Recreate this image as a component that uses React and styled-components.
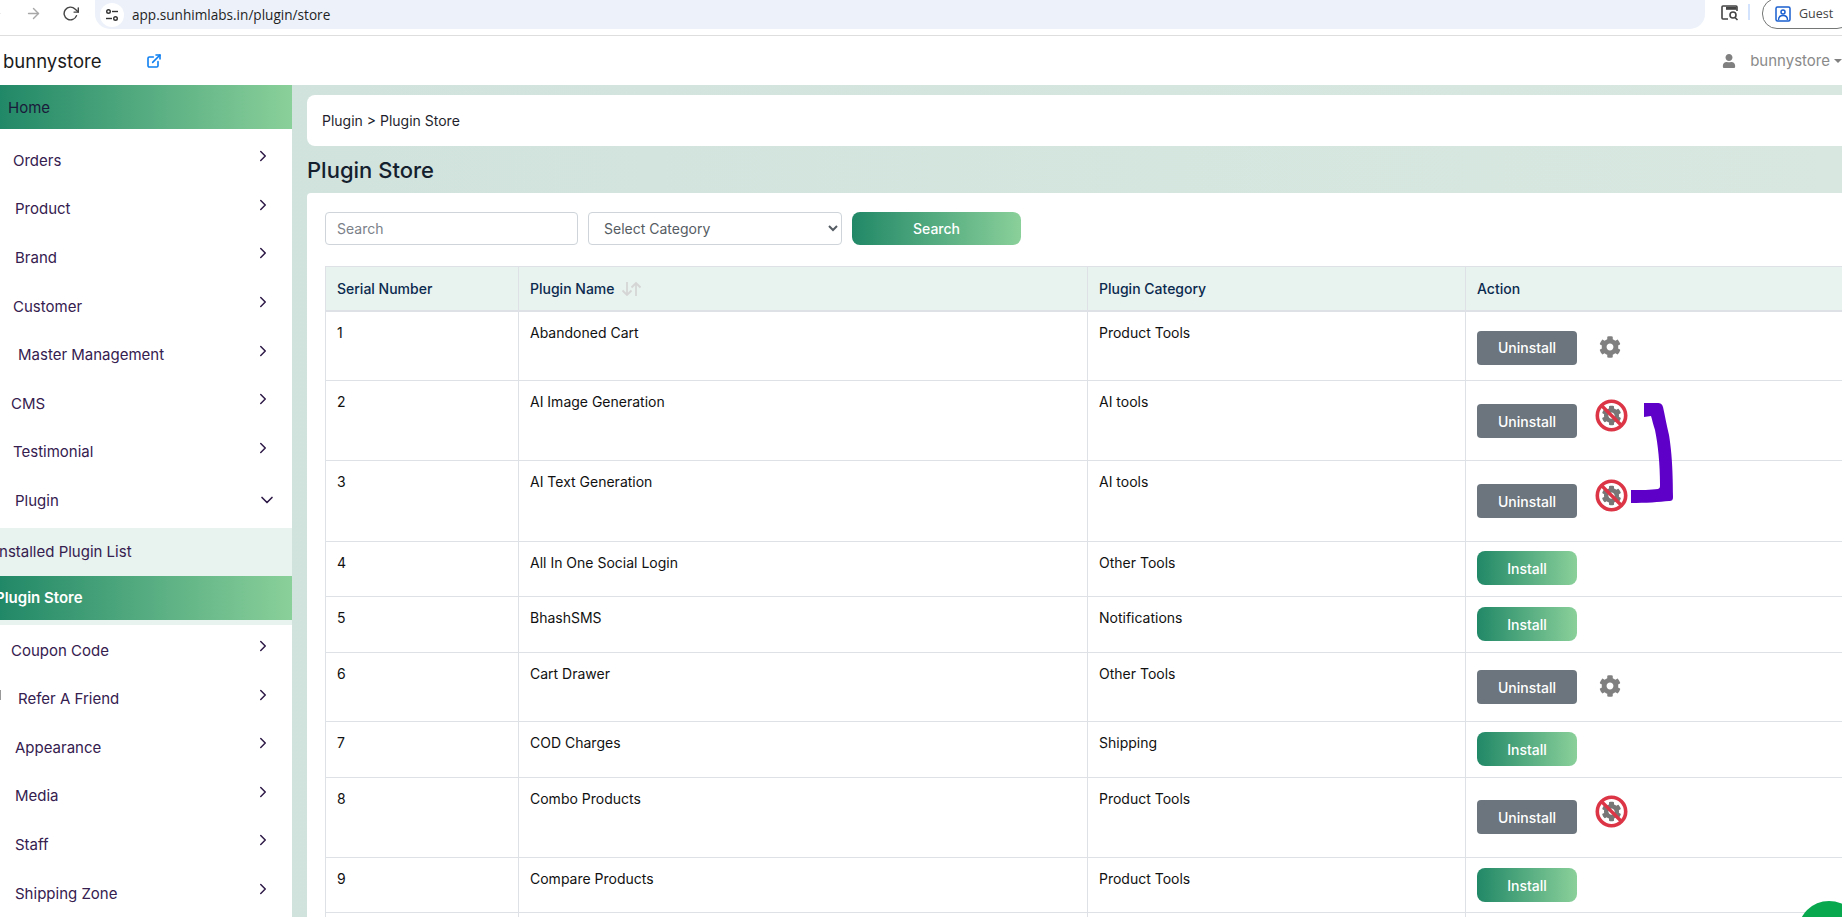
import React from "react";
import styled, { createGlobalStyle } from "styled-components";
import { FaCog, FaUser } from "react-icons/fa";
import { FiChevronRight, FiChevronDown, FiArrowLeft, FiArrowRight, FiRotateCw } from "react-icons/fi";
import { LuExternalLink } from "react-icons/lu";

const GREEN = "linear-gradient(90deg, #218867 0%, #8ad09a 100%)";
const FONT = `Inter, "Open Sans", sans-serif`;

const GlobalStyle = createGlobalStyle`
  html, body { margin: 0; padding: 0; height: 917px; overflow: hidden; background: #fff; }
  * { box-sizing: border-box; }
  body { font-family: ${FONT}; }
`;

const Page = styled.div`
  position: relative;
  width: 1842px;
  height: 917px;
  overflow: hidden;
  display: flex;
  flex-direction: column;
`;

/* browser chrome */
const Chrome = styled.div`
  height: 36px;
  flex: none;
  display: flex;
  align-items: flex-start;
  background: #fff;
  border-bottom: 1px solid #dedede;
`;
const NavBtn = styled.span`
  width: ${(p) => p.$w}px;
  height: 26px;
  flex: none;
  display: flex;
  align-items: center;
  justify-content: flex-end;
  color: ${(p) => p.$color};
  font-size: 17px;
`;
const Address = styled.div`
  margin-left: 16px;
  width: 1610px;
  height: 29px;
  flex: none;
  display: flex;
  align-items: center;
  gap: 8px;
  padding-left: 5px;
  background: #edf2fa;
  border-radius: 0 0 15px 15px;
  font-family: "Open Sans", sans-serif;
  font-size: 13.6px;
  color: #1f1f1f;
`;
const SiteIcon = styled.span`
  width: 24px;
  height: 24px;
  border-radius: 50%;
  background: #fff;
  display: flex;
  align-items: center;
  justify-content: center;
`;
const Lens = styled.span`
  margin-left: 16px;
  width: 18px;
  height: 26px;
  flex: none;
  display: flex;
  align-items: center;
`;
const Divider = styled.span`
  margin: 4px 12px 0 9px;
  width: 2px;
  height: 16px;
  flex: none;
  background: #d3e3fd;
`;
const Guest = styled.div`
  margin-top: -2px;
  width: 90px;
  height: 31px;
  flex: none;
  display: flex;
  align-items: center;
  gap: 8px;
  padding-left: 12px;
  border: 1px solid #747775;
  border-radius: 15px;
  font-family: "Open Sans", sans-serif;
  font-size: 12.5px;
  color: #444;
`;

/* app header */
const Header = styled.header`
  height: 49px;
  flex: none;
  display: flex;
  align-items: center;
  justify-content: space-between;
  background: #fff;
`;
const Brand = styled.div`
  display: flex;
  align-items: center;
  padding-left: 3px;
  font-size: 18.5px;
  color: #1b1b1b;
`;
const BrandLink = styled.span`
  margin-left: 45px;
  display: flex;
  color: #0d7ff0;
`;
const UserBox = styled.div`
  display: flex;
  align-items: center;
  color: #808080;
  font-size: 15px;
  margin-right: 0;
`;
const UserName = styled.span`
  margin-left: 14px;
  color: #8a8a8a;
`;
const Caret = styled.span`
  margin-left: 4px;
  width: 0;
  height: 0;
  border-left: 4px solid transparent;
  border-right: 4px solid transparent;
  border-top: 4px solid #808080;
`;

const Body = styled.div`
  flex: 1;
  min-height: 0;
  display: flex;
  background: linear-gradient(90deg, #c4d9d5 0%, #d0e2dc 3%, #d8e8e1 100%);
`;

/* sidebar */
const Sidebar = styled.nav`
  width: 292px;
  flex: none;
  background: #fff;
`;
const HomeRow = styled.div`
  height: 44px;
  margin-bottom: 7px;
  padding-left: 8px;
  display: flex;
  align-items: center;
  background: ${GREEN};
  color: #1a1a3a;
  font-size: 15px;
`;
const MenuRow = styled.div`
  height: 48.6px;
  display: flex;
  align-items: center;
  justify-content: space-between;
  padding-left: ${(p) => p.$indent}px;
  padding-right: 20px;
  color: #35204f;
  font-size: 15px;
`;
const Chevron = styled.span`
  display: flex;
  margin-top: -8px;
  font-size: 18px;
  color: #2e1a47;
`;
const DownChevron = styled.span`
  display: flex;
  font-size: 20px;
  margin-right: -5px;
  color: #2e1a47;
`;
const SubMenu = styled.div`
  margin-top: 3px;
  margin-bottom: 1px;
  padding-bottom: 5px;
  background: #e8f2ee;
`;
const SubRow = styled.div`
  height: ${(p) => (p.$active ? 44 : 48)}px;
  display: flex;
  align-items: center;
  color: ${(p) => (p.$active ? "#fff" : "#35204f")};
  background: ${(p) => (p.$active ? GREEN : "transparent")};
  font-size: 15px;
  font-weight: ${(p) => (p.$active ? 600 : 400)};
`;
const SubLabel = styled.span`
  margin-left: -5px;
  white-space: nowrap;
`;
const Tick = styled.span`
  position: absolute;
  left: 0;
  top: 690px;
  width: 1px;
  height: 10px;
  background: #999;
`;

/* main column */
const Main = styled.main`
  flex: 1;
  min-width: 0;
  padding: 10px 0 0 15px;
`;
const Crumbs = styled.div`
  margin-right: -20px;
  height: 51px;
  display: flex;
  align-items: center;
  padding-left: 15px;
  background: #fff;
  border-radius: 8px;
  font-size: 14px;
  color: #1f1f2e;
`;
const Title = styled.h1`
  margin: 0;
  height: 47px;
  display: flex;
  align-items: center;
  font-size: 22px;
  font-weight: 500;
  color: #14202e;
`;
const Card = styled.section`
  margin-right: -40px;
  padding: 19px 18px 0;
  background: #fff;
  border-radius: 4px 0 0 0;
`;
const Filters = styled.div`
  display: flex;
  gap: 10px;
  margin-bottom: 21px;
`;
const SearchInput = styled.input`
  width: 253px;
  height: 33px;
  padding: 0 11px;
  border: 1px solid #ced4da;
  border-radius: 4px;
  font-family: ${FONT};
  font-size: 14px;
  &::placeholder { color: #7b8189; }
`;
const CategorySelect = styled.select`
  width: 254px;
  height: 33px;
  padding: 0 11px;
  border: 1px solid #ced4da;
  border-radius: 4px;
  background: #fff;
  font-family: ${FONT};
  font-size: 14px;
  color: #555c63;
`;
const SearchButton = styled.button`
  width: 169px;
  height: 33px;
  border: 0;
  border-radius: 8px;
  background: ${GREEN};
  color: #fff;
  font-family: ${FONT};
  font-size: 14px;
  font-weight: 500;
`;
const Table = styled.table`
  width: 1540px;
  table-layout: fixed;
  border-collapse: collapse;
  font-size: 14px;
  color: #111;
`;
const Th = styled.th`
  width: ${(p) => p.$w}px;
  height: 44px;
  padding: 0 11px;
  text-align: left;
  font-weight: 500;
  color: #0b2a4f;
  background: #e8f2ee;
  border: 1px solid #dee2e6;
  border-bottom-width: 2px;
`;
const Td = styled.td`
  height: ${(p) => p.$h}px;
  padding: 10px 11px 0;
  vertical-align: top;
  line-height: 21px;
  border: 1px solid #dee2e6;
`;
const ActionTd = styled(Td)`
  padding: ${(p) => p.$top}px 11px 0;
`;
const Actions = styled.div`
  display: flex;
  align-items: flex-start;
`;
const ActionBtn = styled.button`
  width: 100px;
  height: 34px;
  flex: none;
  border: 0;
  border-radius: ${(p) => (p.$install ? 8 : 4)}px;
  background: ${(p) => (p.$install ? GREEN : "#6c757d")};
  color: #fff;
  font-family: ${FONT};
  font-size: 14px;
  font-weight: 500;
`;
const GearWrap = styled.span`
  margin: 5px 0 0 22px;
  display: flex;
  font-size: 22px;
  color: #808080;
`;
const NoGearWrap = styled.span`
  margin: -5px 0 0 18px;
  display: flex;
`;
const SortIcon = styled.svg`
  margin-left: 6px;
  vertical-align: -3px;
`;

/* things lying over the page */
const Scribble = styled.svg`
  position: absolute;
  left: 1628px;
  top: 400px;
`;
const ChatBubble = styled.div`
  position: absolute;
  left: 1798px;
  top: 901px;
  width: 62px;
  height: 62px;
  border-radius: 50%;
  background: #08a84f;
`;

const menuTop = [
  ["Orders", 13],
  ["Product", 15],
  ["Brand", 15],
  ["Customer", 13],
  ["Master Management", 18],
  ["CMS", 11],
  ["Testimonial", 13],
];
const menuBottom = [
  ["Coupon Code", 11],
  ["Refer A Friend", 18],
  ["Appearance", 15],
  ["Media", 15],
  ["Staff", 15],
  ["Shipping Zone", 15],
];

const rows = [
  { name: "Abandoned Cart", cat: "Product Tools", h: 70, top: 19, state: "gear" },
  { name: "AI Image Generation", cat: "AI tools", h: 80, top: 23, state: "off" },
  { name: "AI Text Generation", cat: "AI tools", h: 81, top: 23, state: "off" },
  { name: "All In One Social Login", cat: "Other Tools", h: 55, top: 9 },
  { name: "BhashSMS", cat: "Notifications", h: 56, top: 10 },
  { name: "Cart Drawer", cat: "Other Tools", h: 69, top: 17, state: "gear" },
  { name: "COD Charges", cat: "Shipping", h: 56, top: 10 },
  { name: "Combo Products", cat: "Product Tools", h: 80, top: 22, state: "off" },
  { name: "Compare Products", cat: "Product Tools", h: 55, top: 10 },
  { name: "", cat: "", h: 60, top: 10, empty: true },
];

const NoGear = () => (
  <NoGearWrap>
    <svg width="33" height="33" viewBox="0 0 33 33">
      <circle cx="16.5" cy="16.5" r="14.2" fill="#fff" stroke="#dc3545" strokeWidth="3.6" />
      <g transform="translate(6.5 6.5) scale(0.0390625)">
        <path
          fill="#777"
          d="M487.4 315.7l-42.6-24.6c4.3-23.2 4.3-47 0-70.2l42.6-24.6c4.9-2.8 7.1-8.6 5.5-14-11.1-35.6-30-67.8-54.7-94.6-3.8-4.1-10-5.1-14.8-2.3L380.8 110c-17.9-15.4-38.5-27.3-60.8-35.1V25.8c0-5.6-3.9-10.5-9.4-11.7-36.7-8.2-74.3-7.8-109.2 0-5.5 1.2-9.4 6.1-9.4 11.7V75c-22.2 7.9-42.8 19.8-60.8 35.1L88.7 85.5c-4.9-2.8-11-1.9-14.8 2.3-24.7 26.7-43.6 58.9-54.7 94.6-1.7 5.4.6 11.2 5.5 14L67.3 221c-4.3 23.2-4.3 47 0 70.2l-42.6 24.6c-4.9 2.8-7.1 8.6-5.5 14 11.1 35.6 30 67.8 54.7 94.6 3.8 4.1 10 5.1 14.8 2.3l42.6-24.6c17.9 15.4 38.5 27.3 60.8 35.1v49.2c0 5.6 3.9 10.5 9.4 11.7 36.7 8.2 74.3 7.8 109.2 0 5.5-1.2 9.4-6.1 9.4-11.7v-49.2c22.2-7.9 42.8-19.8 60.8-35.1l42.6 24.6c4.9 2.8 11 1.9 14.8-2.3 24.7-26.7 43.6-58.9 54.7-94.6 1.5-5.5-.7-11.3-5.6-14.1zM256 336c-44.1 0-80-35.9-80-80s35.9-80 80-80 80 35.9 80 80-35.9 80-80 80z"
        />
      </g>
      <line x1="6.5" y1="6.5" x2="26.5" y2="26.5" stroke="#dc3545" strokeWidth="3.4" />
    </svg>
  </NoGearWrap>
);

const App = () => (
  <Page>
    <GlobalStyle />
    <Chrome>
      <NavBtn $w={3} $color="#555">
        <FiArrowLeft style={{ flex: "none" }} />
      </NavBtn>
      <NavBtn $w={39} $color="#a8a8a8">
        <FiArrowRight />
      </NavBtn>
      <NavBtn $w={37} $color="#444">
        <FiRotateCw />
      </NavBtn>
      <Address>
        <SiteIcon>
          <svg width="14" height="14" viewBox="0 0 14 14" fill="none" stroke="#333" strokeWidth="1.4">
            <circle cx="3.5" cy="3.5" r="1.8" />
            <line x1="7" y1="3.5" x2="13" y2="3.5" />
            <circle cx="10.5" cy="10.5" r="1.8" />
            <line x1="1" y1="10.5" x2="7" y2="10.5" />
          </svg>
        </SiteIcon>
        app.sunhimlabs.in/plugin/store
      </Address>
      <Lens>
        <svg width="18" height="16" viewBox="0 0 18 16" fill="none" stroke="#444" strokeWidth="1.6">
          <path d="M7 14H2a1 1 0 0 1-1-1V2a1 1 0 0 1 1-1h13a1 1 0 0 1 1 1v4" />
          <path d="M5 1.8h10.5v3H5z" fill="#444" stroke="none" />
          <circle cx="12" cy="10" r="3" />
          <line x1="14" y1="12.5" x2="16.5" y2="15" />
        </svg>
      </Lens>
      <Divider />
      <Guest>
        <svg width="16" height="16" viewBox="0 0 16 16" fill="none" stroke="#1a5fd0" strokeWidth="1.5">
          <rect x="1" y="1" width="14" height="14" rx="1.5" />
          <circle cx="8" cy="6" r="2" />
          <path d="M3.5 14c0-3 2-4.5 4.5-4.5s4.5 1.5 4.5 4.5" />
        </svg>
        Guest
      </Guest>
    </Chrome>
    <Header>
      <Brand>
        bunnystore
        <BrandLink>
          <LuExternalLink size={16} strokeWidth={2.4} />
        </BrandLink>
      </Brand>
      <UserBox>
        <FaUser size={14} />
        <UserName>bunnystore</UserName>
        <Caret />
      </UserBox>
    </Header>
    <Body>
      <Sidebar>
        <HomeRow>Home</HomeRow>
        {menuTop.map(([label, indent]) => (
          <MenuRow key={label} $indent={indent}>
            {label}
            <Chevron>
              <FiChevronRight />
            </Chevron>
          </MenuRow>
        ))}
        <MenuRow $indent={15}>
          Plugin
          <DownChevron>
            <FiChevronDown />
          </DownChevron>
        </MenuRow>
        <SubMenu>
          <SubRow>
            <SubLabel>Installed Plugin List</SubLabel>
          </SubRow>
          <SubRow $active>
            <SubLabel>Plugin Store</SubLabel>
          </SubRow>
        </SubMenu>
        {menuBottom.map(([label, indent]) => (
          <MenuRow key={label} $indent={indent}>
            {label}
            <Chevron>
              <FiChevronRight />
            </Chevron>
          </MenuRow>
        ))}
      </Sidebar>
      <Main>
        <Crumbs>Plugin &gt; Plugin Store</Crumbs>
        <Title>Plugin Store</Title>
        <Card>
          <Filters>
            <SearchInput placeholder="Search" />
            <CategorySelect defaultValue="">
              <option value="">Select Category</option>
            </CategorySelect>
            <SearchButton>Search</SearchButton>
          </Filters>
          <Table>
            <thead>
              <tr>
                <Th $w={193}>Serial Number</Th>
                <Th $w={569}>
                  Plugin Name
                  <SortIcon width="22" height="16" viewBox="0 0 22 16" fill="none" stroke="#d5d5d5" strokeWidth="1.8">
                    <path d="M6 1v13M1.5 9.5 6 14l4.500-4.500" />
                    <path d="M15 15V2M10.500 6.500 15 2l4.500 4.500" />
                  </SortIcon>
                </Th>
                <Th $w={378}>Plugin Category</Th>
                <Th>Action</Th>
              </tr>
            </thead>
            <tbody>
              {rows.map((row, i) => (
                <tr key={i}>
                  <Td $h={row.h}>{row.empty ? "" : i + 1}</Td>
                  <Td $h={row.h}>{row.name}</Td>
                  <Td $h={row.h}>{row.cat}</Td>
                  <ActionTd $h={row.h} $top={row.top}>
                    {!row.empty && (
                      <Actions>
                        <ActionBtn $install={!row.state}>{row.state ? "Uninstall" : "Install"}</ActionBtn>
                        {row.state === "gear" && (
                          <GearWrap>
                            <FaCog />
                          </GearWrap>
                        )}
                        {row.state === "off" && <NoGear />}
                      </Actions>
                    )}
                  </ActionTd>
                </tr>
              ))}
            </tbody>
          </Table>
        </Card>
      </Main>
    </Body>
    <Tick />
    <Scribble width="54" height="110" viewBox="0 0 54 110">
      <path
        d="M16 3h13c4 0 5 1 6 4 2 9 4 20 6 28 2 12 4 30 4 62 0 3-1 4-4 4-9 1-24 2-38 2V90c10 0 20 0 27-1 2-1 2-2 2-4 0-22-2-40-5-55-2-6-3-11-4-14l-7 1V3z"
        fill="#5f00c8"
      />
    </Scribble>
    <ChatBubble />
  </Page>
);

export default App;
